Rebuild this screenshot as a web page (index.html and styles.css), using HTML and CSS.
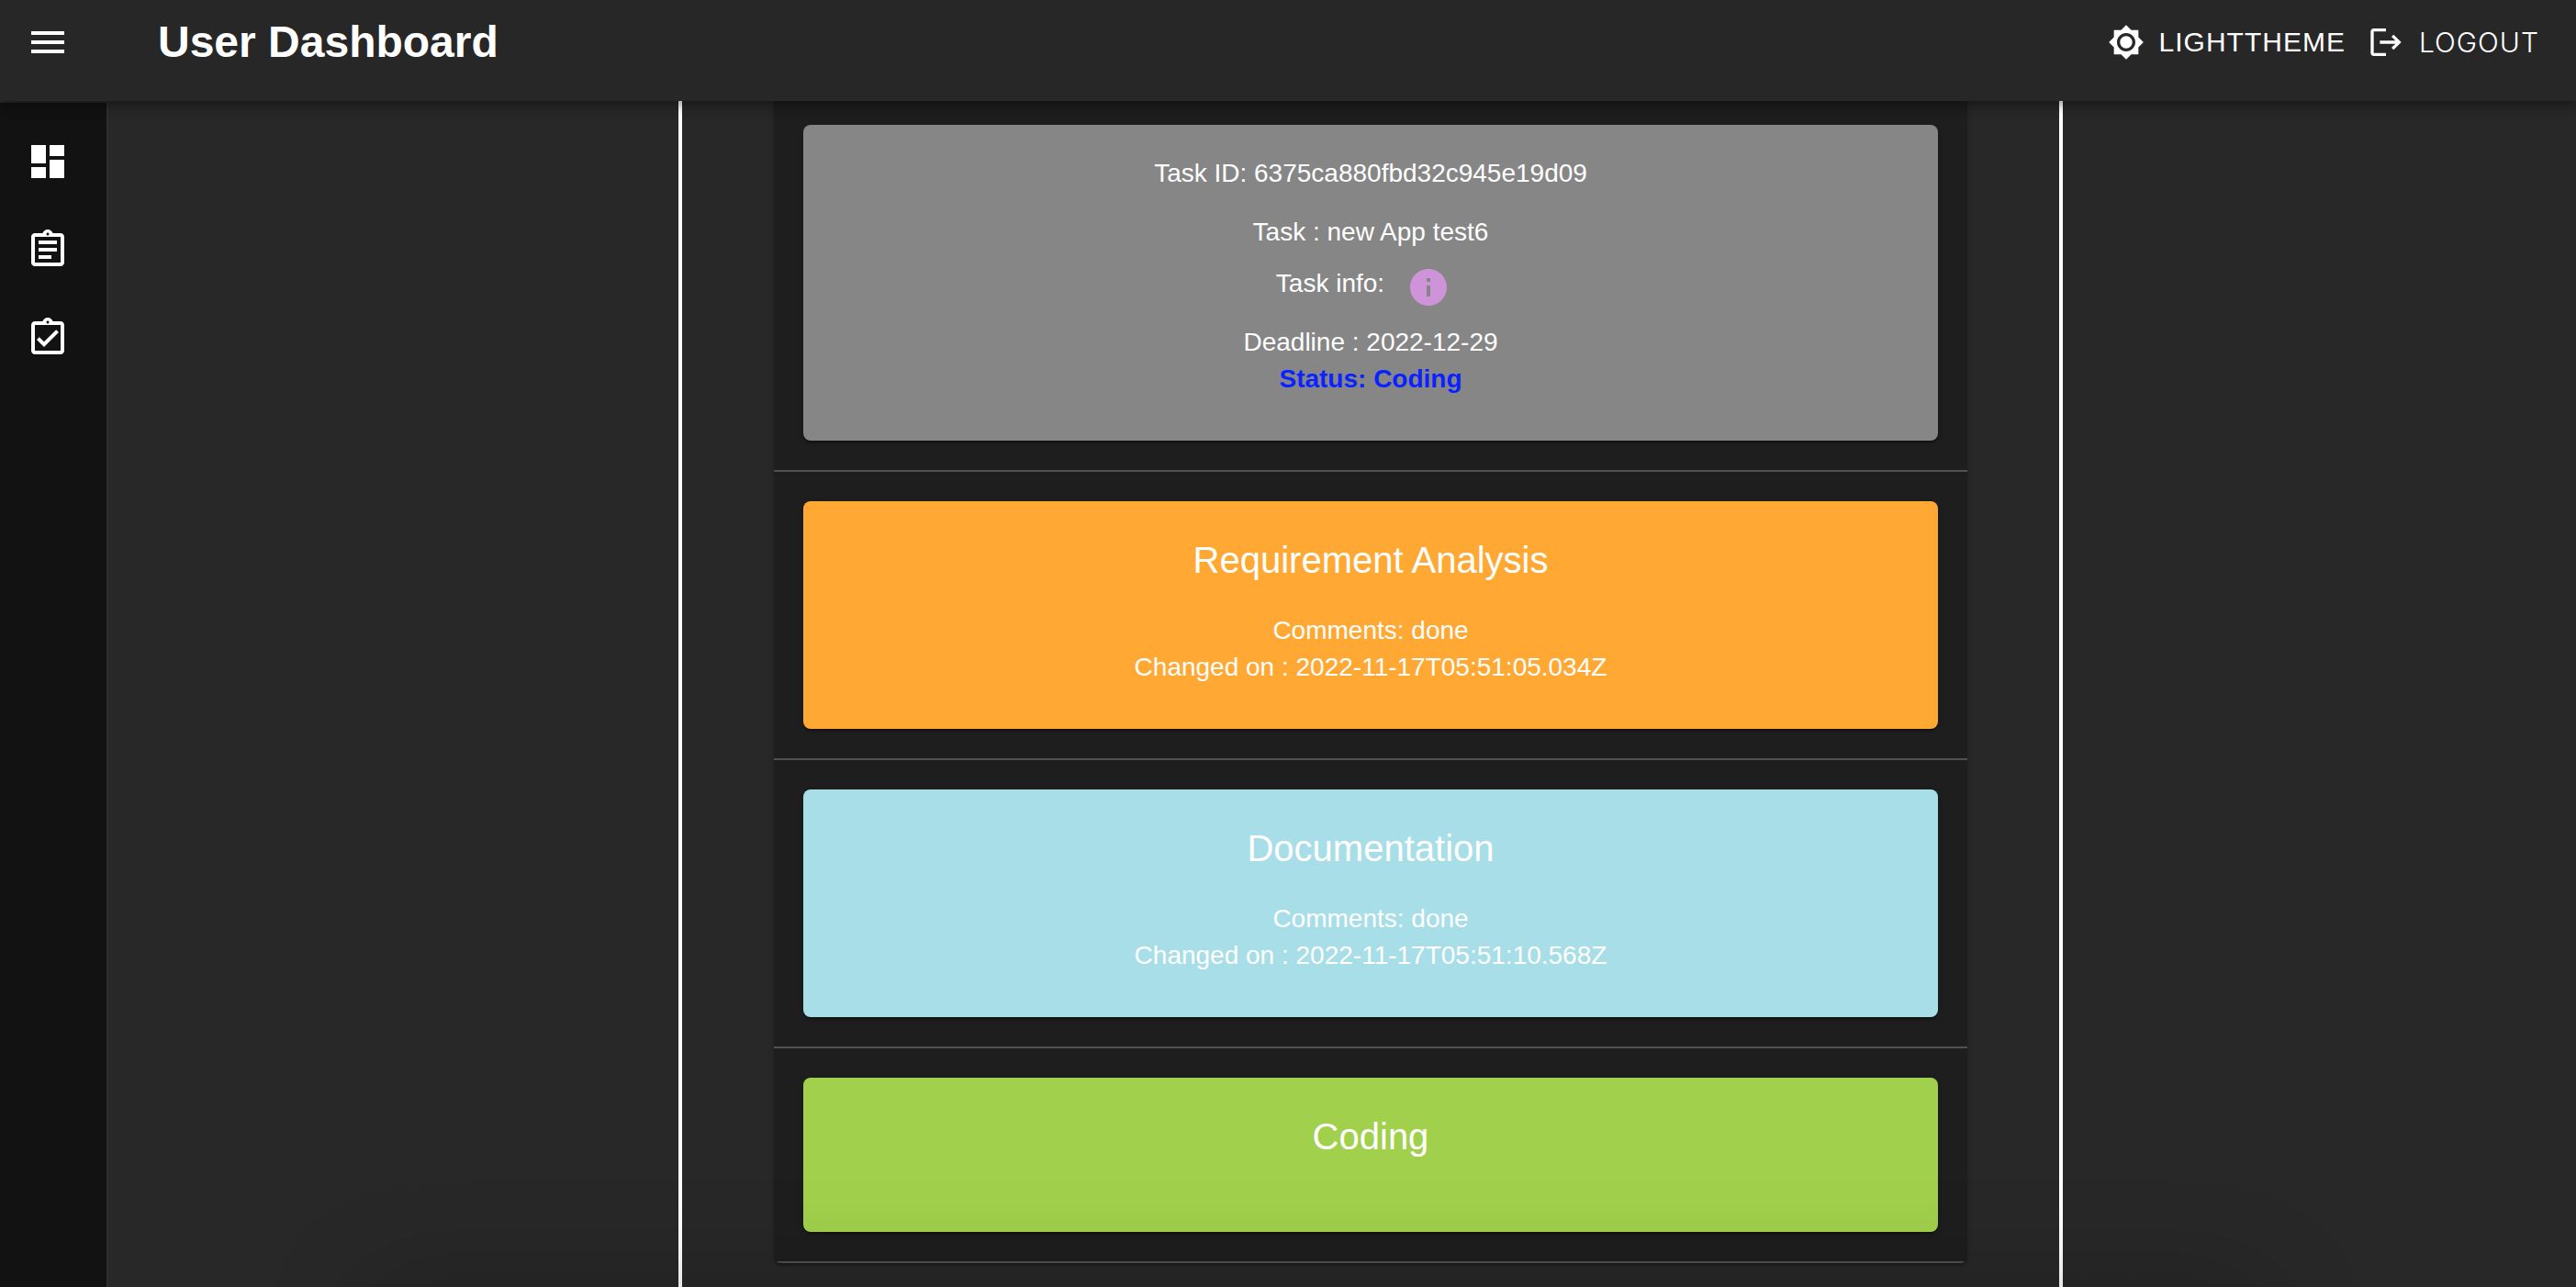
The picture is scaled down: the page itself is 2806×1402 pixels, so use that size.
FILE: index.html
```html
<!DOCTYPE html>
<html lang="en">
<head>
<meta charset="utf-8">
<title>User Dashboard</title>
<meta name="viewport" content="width=device-width, initial-scale=1">
<link rel="stylesheet" href="styles.css">
</head>
<body>
<header class="topbar">
  <button class="icon-button" type="button" aria-label="Open menu">
    <svg class="icon" viewBox="0 0 24 24" aria-hidden="true"><path d="M3 18h18v-2H3v2zm0-5h18v-2H3v2zm0-7v2h18V6H3z"/></svg>
  </button>
  <h1 class="title">User Dashboard</h1>
  <div class="actions">
    <button class="action" type="button">
      <svg class="icon icon-small" viewBox="0 0 24 24" aria-hidden="true"><path d="M20 8.690V4h-4.690L12 .69 8.690 4H4v4.690L.69 12 4 15.310V20h4.690L12 23.310 15.310 20H20v-4.690L23.310 12 20 8.690zM12 18c-3.310 0-6-2.690-6-6s2.690-6 6-6 6 2.690 6 6-2.690 6-6 6zm0-10c-2.210 0-4 1.790-4 4s1.790 4 4 4 4-1.790 4-4-1.790-4-4-4z"/></svg>
      LIGHTTHEME
    </button>
    <button class="action action-light" type="button">
      <svg class="icon icon-small" viewBox="0 0 24 24" aria-hidden="true"><path d="m17 7-1.410 1.410L18.170 11H8v2h10.170l-2.580 2.580L17 17l5-5zM4 5h8V3H4c-1.100 0-2 .9-2 2v14c0 1.100.9 2 2 2h8v-2H4V5z"/></svg>
      LOGOUT
    </button>
  </div>
</header>
<div class="layout">
  <nav class="sidebar" aria-label="Main">
    <a class="nav-link" href="#dashboard" aria-label="Dashboard">
      <svg class="icon" viewBox="0 0 24 24" aria-hidden="true"><path d="M3 13h8V3H3v10zm0 8h8v-6H3v6zm10 0h8V11h-8v10zm0-18v6h8V3h-8z"/></svg>
    </a>
    <a class="nav-link" href="#tasks" aria-label="Tasks">
      <svg class="icon" viewBox="0 0 24 24" aria-hidden="true"><path d="M7 15h7v2H7zm0-4h10v2H7zm0-4h10v2H7zm12-4h-4.180C14.400 1.840 13.300 1 12 1c-1.300 0-2.400.84-2.820 2H5c-.14 0-.27.01-.4.04-.39.08-.74.28-1.010.55-.18.18-.33.4-.43.64-.1.23-.16.49-.16.77v14c0 .27.06.54.16.78s.25.45.43.64c.27.27.62.47 1.010.55.13.02.26.03.4.03h14c1.100 0 2-.9 2-2V5c0-1.100-.9-2-2-2zm-7-.25c.41 0 .75.34.75.75s-.34.75-.75.75-.75-.34-.75-.75.34-.75.75-.75zM19 19H5V5h14v14z"/></svg>
    </a>
    <a class="nav-link" href="#completed" aria-label="Completed tasks">
      <svg class="icon" viewBox="0 0 24 24" aria-hidden="true"><path fill-rule="evenodd" d="M19 3h-4.180C14.400 1.840 13.300 1 12 1s-2.400.84-2.820 2H5c-1.100 0-2 .9-2 2v14c0 1.100.9 2 2 2h14c1.100 0 2-.9 2-2V5c0-1.100-.9-2-2-2zm-7-.25c.41 0 .75.34.75.75s-.34.75-.75.75-.75-.34-.75-.75.34-.75.75-.75zM19 19H5V5h14v14z"/><path d="M17.990 9l-1.410-1.420-6.590 6.590-2.580-2.570-1.420 1.410 4 3.990z"/></svg>
    </a>
  </nav>
  <main class="content">
    <section class="column">
      <ul class="history">
        <li class="entry">
          <article class="card card-task">
            <p class="line task-id">Task ID: 6375ca880fbd32c945e19d09</p>
            <p class="line task-name">Task : new App test6</p>
            <div class="task-info">
              <span>Task info:</span>
              <button class="info-button" type="button" aria-label="Show task info">
                <svg class="icon" viewBox="0 0 24 24" aria-hidden="true"><path d="M12 2C6.480 2 2 6.480 2 12s4.480 10 10 10 10-4.480 10-10S17.520 2 12 2zm1 15h-2v-6h2v6zm0-8h-2V7h2v2z"/></svg>
              </button>
            </div>
            <p class="line">Deadline : 2022-12-29</p>
            <p class="line status">Status: Coding</p>
          </article>
        </li>
        <li class="entry">
          <article class="card card-stage card-analysis">
            <h2 class="stage">Requirement Analysis</h2>
            <p class="line">Comments: done</p>
            <p class="line">Changed on : 2022-11-17T05:51:05.034Z</p>
          </article>
        </li>
        <li class="entry">
          <article class="card card-stage card-documentation">
            <h2 class="stage">Documentation</h2>
            <p class="line">Comments: done</p>
            <p class="line">Changed on : 2022-11-17T05:51:10.568Z</p>
          </article>
        </li>
        <li class="entry">
          <article class="card card-stage card-coding">
            <h2 class="stage">Coding</h2>
          </article>
        </li>
      </ul>
    </section>
  </main>
</div>
</body>
</html>
```
FILE: styles.css
```css
*,
*::before,
*::after {
  box-sizing: border-box;
}

body {
  margin: 0;
  min-height: 100vh;
  display: flex;
  flex-direction: column;
  background: #282828;
  color: #fff;
  font-family: "Liberation Sans", Arial, sans-serif;
  font-size: 28px;
  line-height: 40px;
}

/* Soft shade rising from the bottom edge of the window */
body::after {
  content: "";
  position: fixed;
  top: 100%;
  right: 340px;
  left: 400px;
  height: 200px;
  box-shadow: 0 0 120px rgba(0, 0, 0, 0.2);
  pointer-events: none;
}

h1,
h2,
p,
ul {
  margin: 0;
  padding: 0;
}

button {
  padding: 0;
  border: 0;
  background: none;
  color: inherit;
  font: inherit;
  cursor: pointer;
}

.icon {
  display: block;
  flex: none;
  width: 48px;
  height: 48px;
  fill: currentColor;
}

.icon-small {
  width: 40px;
  height: 40px;
}

/* Top bar */

.topbar {
  position: sticky;
  top: 0;
  z-index: 2;
  display: flex;
  align-items: flex-start;
  height: 110px;
  padding: 22px 40px 0 28px;
  background: #272727;
  box-shadow: 0 4px 8px -2px rgba(0, 0, 0, 0.2), 0 8px 10px rgba(0, 0, 0, 0.14), 0 2px 20px rgba(0, 0, 0, 0.12);
}

.title {
  margin-left: 96px;
  font-size: 48px;
  line-height: 48px;
}

.actions {
  display: flex;
  gap: 24px;
  margin-left: auto;
}

.action {
  display: flex;
  align-items: center;
  gap: 16px;
  height: 48px;
  font-size: 30px;
  letter-spacing: 1px;
}

.action-light {
  font-family: Inter, "Liberation Sans", sans-serif;
  font-weight: 300;
}

/* Page body */

.layout {
  display: flex;
  flex: 1;
}

.sidebar {
  display: flex;
  flex-direction: column;
  gap: 48px;
  width: 118px;
  padding: 40px 0 0 28px;
  border-top: 2px solid #2a2a2a;
  border-right: 2px solid #2f2f2f;
  background: #121212;
}

.nav-link {
  width: 48px;
  color: inherit;
}

.content {
  display: flex;
  flex: 1;
  justify-content: center;
  padding-left: 62px;
}

.column {
  width: 100%;
  max-width: 1508px;
  padding: 0 100px 26px;
  border: solid #fff;
  border-width: 0 4px;
}

.history {
  overflow: hidden;
  list-style: none;
  border-radius: 0 0 8px 8px;
  background: #1e1e1e;
  box-shadow: 0 4px 2px -2px rgba(0, 0, 0, 0.2), 0 2px 2px rgba(0, 0, 0, 0.14), 0 2px 6px rgba(0, 0, 0, 0.12);
}

.entry {
  padding: 32px;
  border-bottom: 2px solid #515151;
}

.entry:first-child {
  padding-top: 26px;
}

.card {
  padding-bottom: 47px;
  border-radius: 8px;
  text-align: center;
  box-shadow: 0 4px 2px -2px rgba(0, 0, 0, 0.2), 0 2px 2px rgba(0, 0, 0, 0.14), 0 2px 6px rgba(0, 0, 0, 0.12);
}

.card-task {
  padding-top: 33px;
  background: #868686;
}

.card-stage {
  padding-top: 40px;
}

.card-analysis {
  background: #ffa834;
}

.card-documentation {
  background: #a8dee7;
}

.card-coding {
  background: #a1d14c;
}

.task-id {
  margin-bottom: 24px;
}

.task-info {
  display: flex;
  justify-content: center;
  gap: 8px;
  margin: 16px 0;
}

.info-button {
  padding: 0 16px;
  color: #ce93d8;
}

.status {
  color: #0a22ff;
  font-weight: 700;
}

.stage {
  margin-bottom: 33px;
  font-size: 40px;
  font-weight: 400;
  line-height: 48px;
}
```
